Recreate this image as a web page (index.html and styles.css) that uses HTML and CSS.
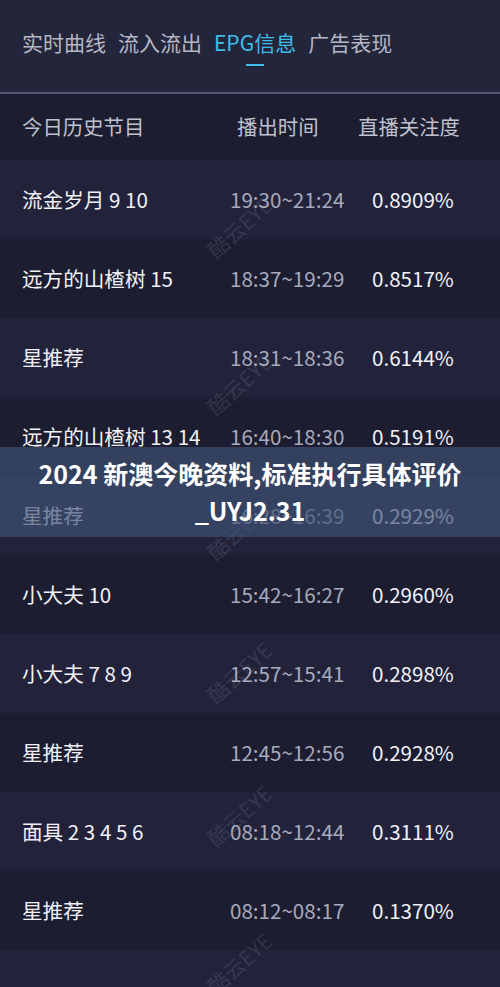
FILE: index.html
```html
<!DOCTYPE html>
<html lang="zh-CN">
<head>
<meta charset="utf-8">
<title>EPG信息</title>
<link rel="stylesheet" href="styles.css">
</head>
<body>
<div class="page">
  <nav class="tabs">
    <span class="tab">实时曲线</span>
    <span class="tab">流入流出</span>
    <span class="tab active">EPG信息</span>
    <span class="tab">广告表现</span>
  </nav>
  <div class="table">
    <div class="row head">
      <span class="c1">今日历史节目</span>
      <span class="c2">播出时间</span>
      <span class="c3">直播关注度</span>
    </div>
    <div class="row odd"><span class="c1">流金岁月 9 10</span><span class="c2">19:30~21:24</span><span class="c3">0.8909%</span></div>
    <div class="row even"><span class="c1">远方的山楂树 15</span><span class="c2">18:37~19:29</span><span class="c3">0.8517%</span></div>
    <div class="row odd"><span class="c1">星推荐</span><span class="c2">18:31~18:36</span><span class="c3">0.6144%</span></div>
    <div class="row even"><span class="c1">远方的山楂树 13 14</span><span class="c2">16:40~18:30</span><span class="c3">0.5191%</span></div>
    <div class="row odd"><span class="c1">星推荐</span><span class="c2">16:28~16:39</span><span class="c3">0.2929%</span></div>
    <div class="row even"><span class="c1">小大夫 10</span><span class="c2">15:42~16:27</span><span class="c3">0.2960%</span></div>
    <div class="row odd"><span class="c1">小大夫 7 8 9</span><span class="c2">12:57~15:41</span><span class="c3">0.2898%</span></div>
    <div class="row even"><span class="c1">星推荐</span><span class="c2">12:45~12:56</span><span class="c3">0.2928%</span></div>
    <div class="row odd"><span class="c1">面具 2 3 4 5 6</span><span class="c2">08:18~12:44</span><span class="c3">0.3111%</span></div>
    <div class="row even"><span class="c1">星推荐</span><span class="c2">08:12~08:17</span><span class="c3">0.1370%</span></div>
    <div class="row odd"></div>
  </div>
  <div class="wm w1">酷云EYE</div>
  <div class="wm w2">酷云EYE</div>
  <div class="wm w3">酷云EYE</div>
  <div class="wm w4">酷云EYE</div>
  <div class="wm w5">酷云EYE</div>
  <div class="wm w6">酷云EYE</div>
  <div class="banner">
    <div class="banner-text">2024 新澳今晚资料,标准执行具体评价<br>_UYJ2.31</div>
  </div>
</div>
</body>
</html>
```

FILE: styles.css
```css
html, body {
  margin: 0;
  padding: 0;
  background: #1c1d30;
}
body {
  font-family: "Noto Sans CJK SC", "Noto Sans", sans-serif;
  width: 500px;
  height: 987px;
  overflow: hidden;
}
.page {
  position: relative;
  width: 500px;
  height: 987px;
  overflow: hidden;
}
.tabs {
  box-sizing: border-box;
  height: 94px;
  background: #23253b;
  border-bottom: 2px solid #54566f;
  display: flex;
  align-items: flex-start;
  padding: 27px 0 0 22px;
  gap: 12px;
}
.tab {
  position: relative;
  font-size: 21px;
  line-height: 30px;
  color: #b4b6c4;
  white-space: nowrap;
}
.tab.active {
  color: #3fbde6;
}
.tab.active::after {
  content: "";
  position: absolute;
  left: 50%;
  top: 37px;
  width: 18px;
  height: 2px;
  margin-left: -9px;
  background: #3fbde6;
}
.table {
  display: flex;
  flex-direction: column;
}
.row {
  display: grid;
  grid-template-columns: 208px 142px 1fr;
  align-items: center;
  box-sizing: border-box;
  height: 79px;
  padding-left: 22px;
  padding-bottom: 2px;
  font-size: 20.6px;
  white-space: nowrap;
}
.row.head {
  height: 66px;
  font-size: 20.4px;
}
.row.head .c2 { padding-left: 7px; }
.row.head .c3 { margin-left: -14px; }
.row.odd { background: #22233b; }
.row.even { background: #1c1d30; }
.c1 { color: #f1f1f5; }
.c2 { color: #a8aabc; }
.c3 { color: #f1f1f5; }
.row.head .c1, .row.head .c2, .row.head .c3 { color: #bfc1cf; }
.wm {
  position: absolute;
  left: 200px;
  font-size: 21px;
  color: rgba(255, 255, 255, 0.11);
  transform: rotate(-42deg);
  transform-origin: center;
  white-space: nowrap;
  pointer-events: none;
}
.w1 { top: 212px; }
.w2 { top: 369px; }
.w3 { top: 514px; }
.w4 { top: 657px; }
.w5 { top: 800px; }
.w6 { top: 948px; }
.banner {
  position: absolute;
  left: 0;
  top: 447px;
  width: 500px;
  height: 90px;
  background: rgba(62, 81, 117, 0.68);
  display: flex;
  align-items: center;
  justify-content: center;
}
.banner-text {
  color: #ffffff;
  font-weight: 700;
  font-size: 25px;
  line-height: 37px;
  text-align: center;
  white-space: nowrap;
}
```
